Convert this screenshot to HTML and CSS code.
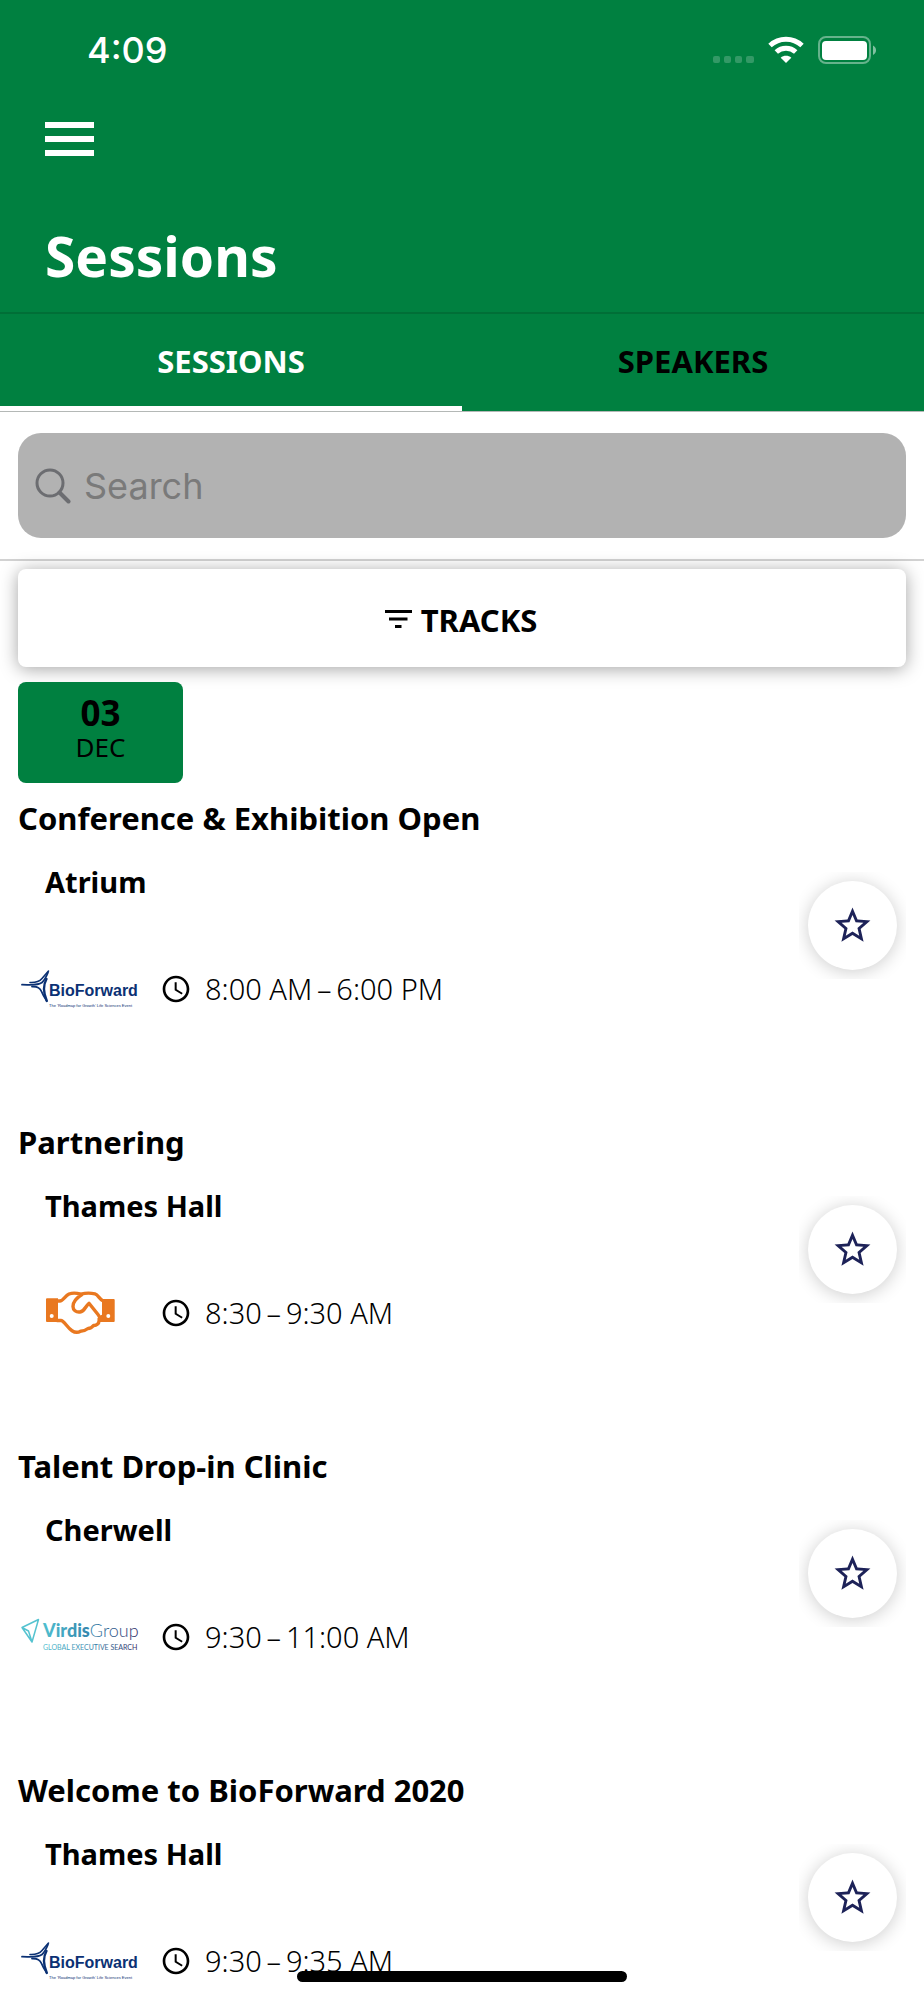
FILE: index.html
```html
<!DOCTYPE html>
<html lang="en">
<head>
<meta charset="utf-8">
<meta name="viewport" content="width=device-width, initial-scale=1">
<title>Sessions</title>
<link rel="stylesheet" href="styles.css">
</head>
<body>
<svg class="defs" width="0" height="0" aria-hidden="true">
  <defs>
    <linearGradient id="virdis" gradientUnits="userSpaceOnUse" x1="25" y1="0" x2="120" y2="0">
      <stop offset="0" stop-color="#4fbfcf"/><stop offset="0.5" stop-color="#3585ad"/><stop offset="1" stop-color="#2b2c66"/>
    </linearGradient>
    <symbol id="logo-bioforward" viewBox="0 0 124 60">
      <g fill="none" stroke="#0b3174" stroke-linecap="round">
        <path d="M12 23.500c6 .3 9-.5 12-4L30.500 12" stroke-width="1.600"/>
        <path d="M4 25.700c9 0 16 1 20-2.200 2-1.800 4-5 6-10" stroke-width="1.800"/>
        <path d="M28.500 20c-3.500 6-3.500 13 .3 22" stroke-width="2.400"/>
        <path d="M14 27.500c6-.2 8 1.500 9.500 5 1.200 3 2.500 5.500 5 9" stroke-width="1.800"/>
      </g>
      <g fill="#0b3174">
        <text class="bio-name" x="31" y="37">BioForward</text>
        <text class="bio-tag" x="31" y="48">The ‘Roadmap for Growth’ Life Sciences Event</text>
      </g>
    </symbol>
    <symbol id="logo-virdis" viewBox="0 0 124 60">
      <path d="M4 20.500L20.500 12.500 14 35zM4 20.500l6.500 3.500L14 35" fill="none" stroke="#55c3d0" stroke-width="1.500" stroke-linejoin="round"/>
      <text class="virdis-name" x="25" y="30" fill="url(#virdis)"><tspan class="virdis-bold">Virdis</tspan>Group</text>
      <text class="virdis-tag" x="25" y="43" fill="url(#virdis)">GLOBAL EXECUTIVE SEARCH</text>
    </symbol>
    <symbol id="logo-handshake" viewBox="0 0 124 60">
      <path fill="#e97820" fill-rule="evenodd" d="M29 15.300h11V39H29a1 1 0 0 1-1-1V16.300a1 1 0 0 1 1-1zM33.700 31a2 2 0 1 0 0 4 2 2 0 0 0 0-4zM84 16h11.700a1 1 0 0 1 1 1v21a1 1 0 0 1-1 1H81l3-5zM90.300 31a2 2 0 1 0 0 4 2 2 0 0 0 0-4z"/>
      <path fill="none" stroke="#e97820" stroke-width="3.400" stroke-linejoin="round" stroke-linecap="round" d="M39 18h3c3 0 5-5 9-7 3-1.200 8-1 12 .2 4-1.200 10-1.200 14-.4 3 .8 5 6 8 7M39 37.500h4c3 0 6 7 11 10.200 3 2 6 2 8.500.5 3 0 5-.7 7.500-2.700 3 0 4-1 5.500-3 3 .3 5.500-2 5.500-4.500 2-2 1-4-1-6.500L71 20.300c-4 3-4 8-9 8.700-4 .5-7-2-7-5.500 0-5 4-9 9-12M81 36l3-2.500"/>
    </symbol>
    <symbol id="icon-clock" viewBox="0 0 24 24">
      <path d="M11.990 2C6.470 2 2 6.480 2 12s4.470 10 9.990 10C17.520 22 22 17.520 22 12S17.520 2 11.990 2zM12 20c-4.420 0-8-3.580-8-8s3.580-8 8-8 8 3.580 8 8-3.580 8-8 8zm.5-13H11v6l5.250 3.150.75-1.230-4.500-2.670z"/>
    </symbol>
    <symbol id="icon-star" viewBox="0 0 24 24">
      <path fill="#1d2258" d="M22 9.240l-7.190-.62L12 2 9.190 8.630 2 9.240l5.460 4.730L5.820 21 12 17.270 18.180 21l-1.630-7.030L22 9.240zM12 15.400l-3.760 2.270 1-4.280-3.320-2.880 4.380-.38L12 6.100l1.710 4.040 4.380.38-3.320 2.880 1 4.280L12 15.400z"/>
    </symbol>
  </defs>
</svg>

<header class="header">
  <div class="status">
    <span class="status-time">4:09</span>
    <div class="status-icons">
      <svg width="41" height="28" viewBox="0 0 41 28" fill="#fff" opacity=".2"><rect y="20" width="7" height="7" rx="2"/><rect x="11" y="20" width="7" height="7" rx="2"/><rect x="22" y="20" width="7" height="7" rx="2"/><rect x="33" y="20" width="8" height="7" rx="2"/></svg>
      <svg width="36" height="28" viewBox="0 0 36 28"><g fill="none" stroke="#fff" stroke-width="5"><path d="M2 9.500a23.500 23.500 0 0 1 32 0"/><path d="M8.300 16a14.400 14.400 0 0 1 19.400 0"/></g><path fill="#fff" d="M18 27l-5.300-5.200c3-2.600 7.600-2.600 10.600 0z"/></svg>
      <svg width="58" height="28" viewBox="0 0 58 28"><rect x="1" y="1" width="51" height="26" rx="7" fill="none" stroke="#fff" stroke-opacity=".4" stroke-width="2"/><rect x="4" y="5" width="45" height="19" rx="4" fill="#fff"/><path d="M55 9.500c4 2 4 7.500 0 9.500z" fill="#fff" opacity=".5"/></svg>
    </div>
  </div>
  <button class="menu" type="button" aria-label="Open menu"><svg width="49" height="34" viewBox="0 0 49 34" fill="#fff"><path d="M0 0h49v6H0zM0 14h49v6H0zM0 28h49v6H0z"/></svg></button>
  <h1 class="page-title">Sessions</h1>
  <nav class="tabs">
    <a class="tab tab-active" href="#sessions" aria-current="page">SESSIONS</a>
    <a class="tab" href="#speakers">SPEAKERS</a>
  </nav>
</header>

<main id="sessions">
  <form class="search" role="search">
    <label class="search-box">
      <svg width="36" height="36" viewBox="0 0 36 36" fill="none" stroke="#6c6d71" stroke-width="3"><circle cx="15" cy="15" r="13"/><path d="M24.500 24.500l9 9" stroke-width="4" stroke-linecap="round"/></svg>
      <input class="search-input" type="search" placeholder="Search" aria-label="Search">
    </label>
  </form>

  <div class="list">
    <button class="tracks" type="button">
      <svg width="27" height="18" viewBox="0 0 27 18"><path d="M0 0h27v3H0zM4 7.500h18.500v3H4zM10 15h6.500v3H10z"/></svg>
      TRACKS
    </button>
    <time class="date" datetime="2020-12-03"><b class="date-day">03</b><span class="date-month">DEC</span></time>

    <article class="session">
      <h2 class="session-title">Conference &amp; Exhibition Open</h2>
      <div class="session-body">
        <p class="session-place">Atrium</p>
        <div class="session-row">
          <svg class="session-logo" role="img" aria-label="BioForward"><use href="#logo-bioforward"/></svg>
          <svg class="session-clock" aria-hidden="true"><use href="#icon-clock"/></svg>
          <span class="session-time">8:00 AM&#8201;–&#8201;6:00 PM</span>
        </div>
      </div>
      <div class="fav-wrap"><button class="fav" type="button" aria-label="Add to favourites"><svg class="fav-icon"><use href="#icon-star"/></svg></button></div>
    </article>

    <article class="session">
      <h2 class="session-title">Partnering</h2>
      <div class="session-body">
        <p class="session-place">Thames Hall</p>
        <div class="session-row">
          <svg class="session-logo" role="img" aria-label="Handshake"><use href="#logo-handshake"/></svg>
          <svg class="session-clock" aria-hidden="true"><use href="#icon-clock"/></svg>
          <span class="session-time">8:30&#8201;–&#8201;9:30 AM</span>
        </div>
      </div>
      <div class="fav-wrap"><button class="fav" type="button" aria-label="Add to favourites"><svg class="fav-icon"><use href="#icon-star"/></svg></button></div>
    </article>

    <article class="session">
      <h2 class="session-title">Talent Drop-in Clinic</h2>
      <div class="session-body">
        <p class="session-place">Cherwell</p>
        <div class="session-row">
          <svg class="session-logo" role="img" aria-label="Virdis Group"><use href="#logo-virdis"/></svg>
          <svg class="session-clock" aria-hidden="true"><use href="#icon-clock"/></svg>
          <span class="session-time">9:30&#8201;–&#8201;11:00 AM</span>
        </div>
      </div>
      <div class="fav-wrap"><button class="fav" type="button" aria-label="Add to favourites"><svg class="fav-icon"><use href="#icon-star"/></svg></button></div>
    </article>

    <article class="session">
      <h2 class="session-title">Welcome to BioForward 2020</h2>
      <div class="session-body">
        <p class="session-place">Thames Hall</p>
        <div class="session-row">
          <svg class="session-logo" role="img" aria-label="BioForward"><use href="#logo-bioforward"/></svg>
          <svg class="session-clock" aria-hidden="true"><use href="#icon-clock"/></svg>
          <span class="session-time">9:30&#8201;–&#8201;9:35 AM</span>
        </div>
      </div>
      <div class="fav-wrap"><button class="fav" type="button" aria-label="Add to favourites"><svg class="fav-icon"><use href="#icon-star"/></svg></button></div>
    </article>
  </div>
</main>
<div class="home-indicator"></div>
</body>
</html>
```
FILE: styles.css
```css
* { box-sizing: border-box; }
body {
  margin: 0;
  background: #fff;
  color: #000;
  font-family: "Noto Sans", "Open Sans", sans-serif;
}
h1, h2, p { margin: 0; }
button { border: 0; padding: 0; font: inherit; color: inherit; cursor: pointer; }
svg { display: block; flex: none; }
.defs { position: absolute; }

/* Header */
.header { background: #008040; color: #fff; border-bottom: 1px solid #b4b8b6; }
.status {
  display: flex;
  justify-content: space-between;
  align-items: center;
  height: 100px;
  padding: 0 48px 0 87px;
}
.status-time { font: 500 36px/40px Inter, sans-serif; }
.status-icons { display: flex; gap: 14px; }
.menu { display: block; margin: 22px 0 0 45px; background: none; }
.page-title { padding: 62px 45px 18px; font-size: 55px; line-height: 76px; font-weight: 700; }
.tabs { display: flex; border-top: 2px solid #006f37; }
.tab {
  flex: 1;
  height: 97px;
  padding-top: 26px;
  border-bottom: 5px solid transparent;
  color: #000;
  font-size: 31px;
  line-height: 42px;
  font-weight: 700;
  text-align: center;
  text-decoration: none;
}
.tab-active { color: #fff; border-color: #fff; }

/* Search */
.search { padding: 21px 18px; border-bottom: 2px solid #d2d2d2; }
.search-box {
  display: flex;
  align-items: center;
  gap: 13px;
  height: 105px;
  padding: 0 17px;
  border-radius: 23px;
  background: #b2b2b2;
}
.search-input {
  flex: 1;
  min-width: 0;
  padding: 0;
  border: 0;
  outline: 0;
  background: none;
  font: 400 36px/48px Inter, sans-serif;
}
.search-input::placeholder { color: #7a7a7a; opacity: 1; }

/* List */
.list { padding: 8px 18px 0; }
.tracks {
  display: flex;
  justify-content: center;
  align-items: center;
  gap: 9px;
  width: 100%;
  height: 98px;
  padding: 4px 2px 0 0;
  border-radius: 8px;
  background: #fff;
  box-shadow: 0 2px 18px rgba(0, 0, 0, .36);
  font-size: 31px;
  line-height: 42px;
  font-weight: 700;
}
.tracks svg { margin-bottom: 3px; }
.date {
  display: flex;
  flex-direction: column;
  align-items: center;
  width: 165px;
  height: 101px;
  margin-top: 15px;
  padding-top: 11px;
  border-radius: 8px;
  background: #008040;
}
.date-day { font-size: 35px; line-height: 39px; font-weight: 700; }
.date-month { font-size: 26px; line-height: 30px; font-weight: 400; }

/* Session */
.session {
  display: grid;
  grid-template-columns: 1fr auto;
  margin-top: 14px;
}
.session + .session { margin-top: 102px; }
.session-title { grid-column: 1 / -1; font-size: 31px; line-height: 42px; font-weight: 700; }
.session-body { padding-top: 23px; }
.session-place { padding-left: 27px; font-size: 29px; line-height: 40px; font-weight: 700; }
.session-row { display: flex; align-items: center; height: 60px; margin-top: 57px; }
.session-logo { width: 124px; height: 60px; }
.session-clock { width: 32px; height: 32px; margin-left: 18px; }
.session-time { margin-left: 13px; font-size: 29px; line-height: 40px; font-weight: 300; }
.fav-wrap { align-self: start; margin-top: 33px; padding: 9px; overflow: hidden; }
.fav {
  display: grid;
  place-items: center;
  width: 89px;
  height: 89px;
  border-radius: 50%;
  background: #fff;
  box-shadow: 0 2px 18px rgba(0, 0, 0, .2);
}
.fav-icon { width: 43px; height: 43px; }

/* Logo lettering */
.bio-name { font: 700 16px "Liberation Sans", sans-serif; }
.bio-tag { font: 400 4px "Liberation Sans", sans-serif; }
.virdis-name { font: 300 18px Lato, sans-serif; }
.virdis-bold { font-weight: 900; }
.virdis-tag { font: 400 7px Lato, sans-serif; }

.home-indicator {
  position: fixed;
  bottom: 18px;
  left: 50%;
  width: 330px;
  height: 11px;
  margin-left: -165px;
  border-radius: 6px;
  background: #000;
}
```
